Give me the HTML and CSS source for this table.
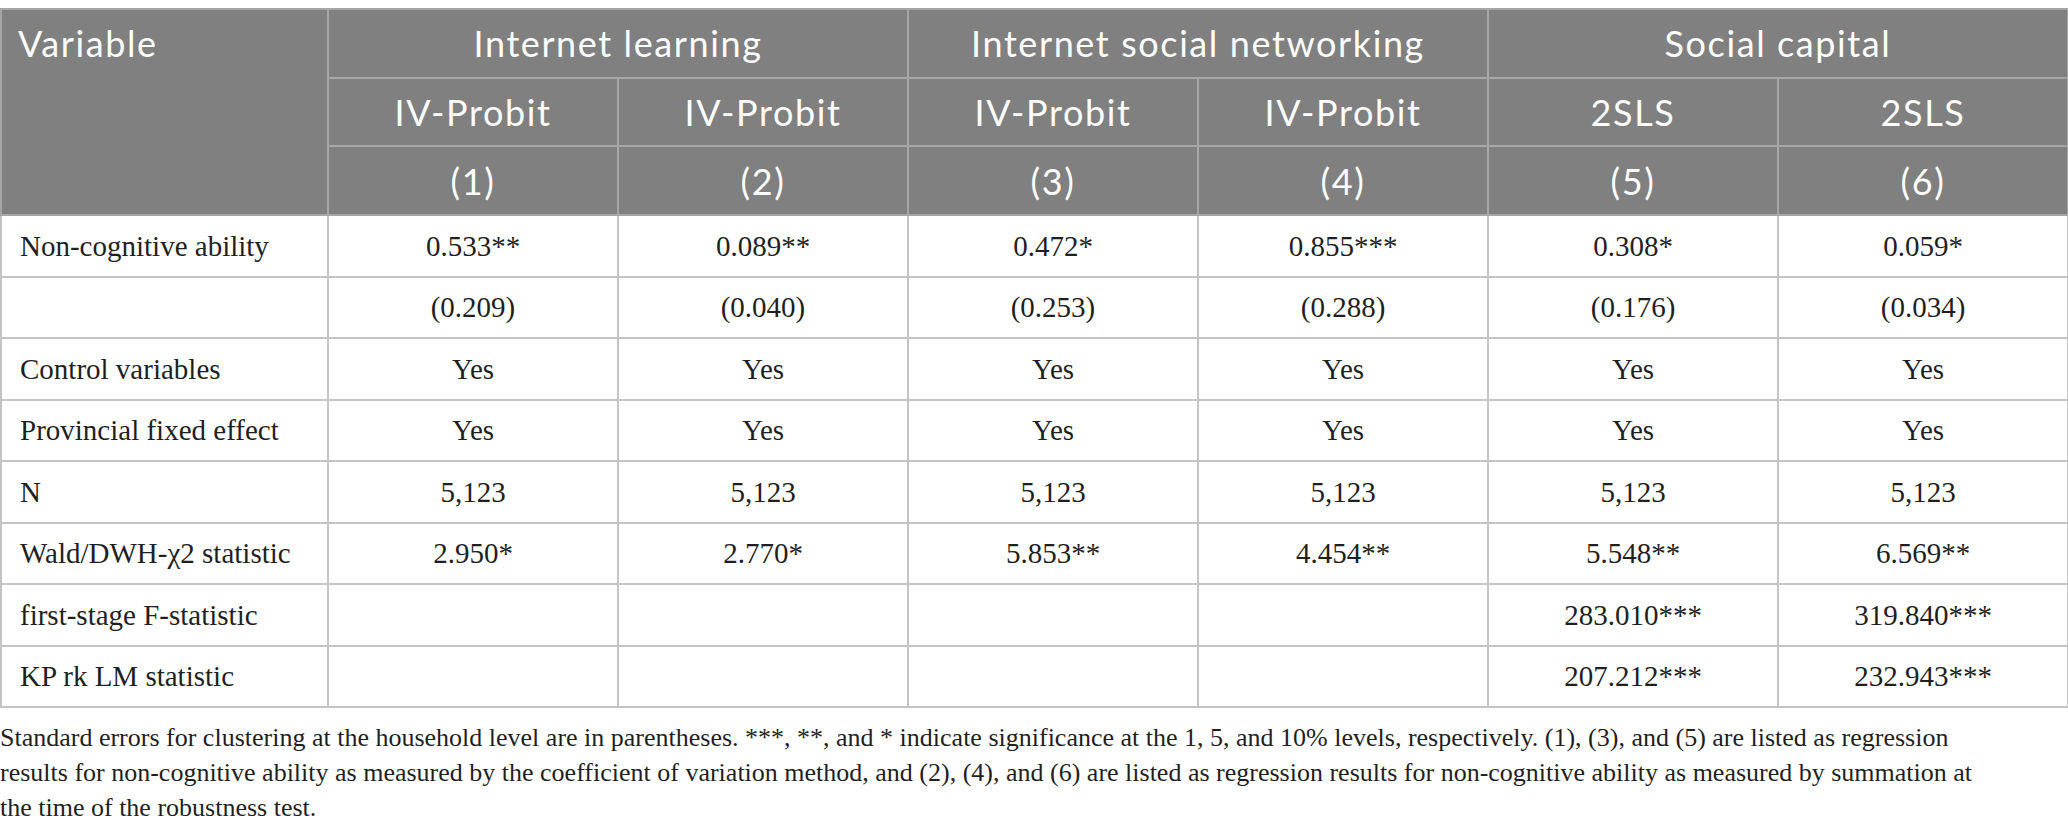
FILE: index.html
```html
<!DOCTYPE html>
<html lang="en">

<head>
    <title>Robustness test: IV-Probit and 2SLS estimates</title>
    <meta charset="utf-8">
    <link rel="stylesheet" href="styles.css">
</head>

<body>
    <div class="table-wrap">
        <table class="results">
            <colgroup>
                <col class="col-var">
                <col span="6" class="col-model">
            </colgroup>
            <thead>
                <tr>
                    <th rowspan="3" class="th-var">Variable</th>
                    <th colspan="2">Internet learning</th>
                    <th colspan="2">Internet social networking</th>
                    <th colspan="2">Social capital</th>
                </tr>
                <tr>
                    <th>IV-Probit</th>
                    <th>IV-Probit</th>
                    <th>IV-Probit</th>
                    <th>IV-Probit</th>
                    <th>2SLS</th>
                    <th>2SLS</th>
                </tr>
                <tr>
                    <th>(1)</th>
                    <th>(2)</th>
                    <th>(3)</th>
                    <th>(4)</th>
                    <th>(5)</th>
                    <th>(6)</th>
                </tr>
            </thead>
            <tbody>
                <tr>
                    <td>Non-cognitive ability</td>
                    <td>0.533**</td>
                    <td>0.089**</td>
                    <td>0.472*</td>
                    <td>0.855***</td>
                    <td>0.308*</td>
                    <td>0.059*</td>
                </tr>
                <tr>
                    <td></td>
                    <td>(0.209)</td>
                    <td>(0.040)</td>
                    <td>(0.253)</td>
                    <td>(0.288)</td>
                    <td>(0.176)</td>
                    <td>(0.034)</td>
                </tr>
                <tr>
                    <td>Control variables</td>
                    <td>Yes</td>
                    <td>Yes</td>
                    <td>Yes</td>
                    <td>Yes</td>
                    <td>Yes</td>
                    <td>Yes</td>
                </tr>
                <tr>
                    <td>Provincial fixed effect</td>
                    <td>Yes</td>
                    <td>Yes</td>
                    <td>Yes</td>
                    <td>Yes</td>
                    <td>Yes</td>
                    <td>Yes</td>
                </tr>
                <tr>
                    <td>N</td>
                    <td>5,123</td>
                    <td>5,123</td>
                    <td>5,123</td>
                    <td>5,123</td>
                    <td>5,123</td>
                    <td>5,123</td>
                </tr>
                <tr>
                    <td>Wald/DWH-χ2 statistic</td>
                    <td>2.950*</td>
                    <td>2.770*</td>
                    <td>5.853**</td>
                    <td>4.454**</td>
                    <td>5.548**</td>
                    <td>6.569**</td>
                </tr>
                <tr>
                    <td>first-stage F-statistic</td>
                    <td></td>
                    <td></td>
                    <td></td>
                    <td></td>
                    <td>283.010***</td>
                    <td>319.840***</td>
                </tr>
                <tr>
                    <td>KP rk LM statistic</td>
                    <td></td>
                    <td></td>
                    <td></td>
                    <td></td>
                    <td>207.212***</td>
                    <td>232.943***</td>
                </tr>
            </tbody>
        </table>
        <p class="table-note">Standard errors for clustering at the household level are in parentheses. ***, **, and * indicate significance at the 1, 5, and 10% levels, respectively. (1), (3), and (5) are listed as regression results for non-cognitive ability as measured by the coefficient of variation method, and (2), (4), and (6) are listed as regression results for non-cognitive ability as measured by summation at the time of the robustness test.</p>
    </div>
</body>

</html>
```

FILE: styles.css
```css
body {
    margin: 0;
    padding: 8px 0 0 0;
    background-color: white;
}

.table-wrap {
    width: 2068px;
}

.results {
    width: 2068px;
    border-collapse: collapse;
    table-layout: fixed;
}

.col-var {
    width: 327px;
}

.col-model {
    width: 290px;
}

.results th {
    background-color: #7f807f;
    color: #fdfdfd;
    font-family: Lato, "Open Sans", sans-serif;
    font-weight: 400;
    font-size: 36px;
    letter-spacing: 1.6px;
    line-height: 40px;
    height: 66.7px;
    padding: 0 8px;
    border: 2px solid #a6a6a6;
    text-align: center;
    vertical-align: middle;
}

.results th.th-var {
    text-align: left;
    vertical-align: top;
    padding: 13px 16px;
}

.results td {
    font-family: "Liberation Serif", "Times New Roman", serif;
    font-size: 29px;
    line-height: 32px;
    color: #1f1f1f;
    height: 59.5px;
    padding: 0 8px;
    border: 2px solid #c4c4c4;
    text-align: center;
    vertical-align: middle;
}

.results td:first-child {
    text-align: left;
    padding-left: 18px;
}

.table-note {
    margin: 12px 0 0 0;
    padding-right: 60px;
    font-family: "Liberation Serif", "Times New Roman", serif;
    font-size: 26px;
    line-height: 35px;
    color: #1f1f1f;
}
```
